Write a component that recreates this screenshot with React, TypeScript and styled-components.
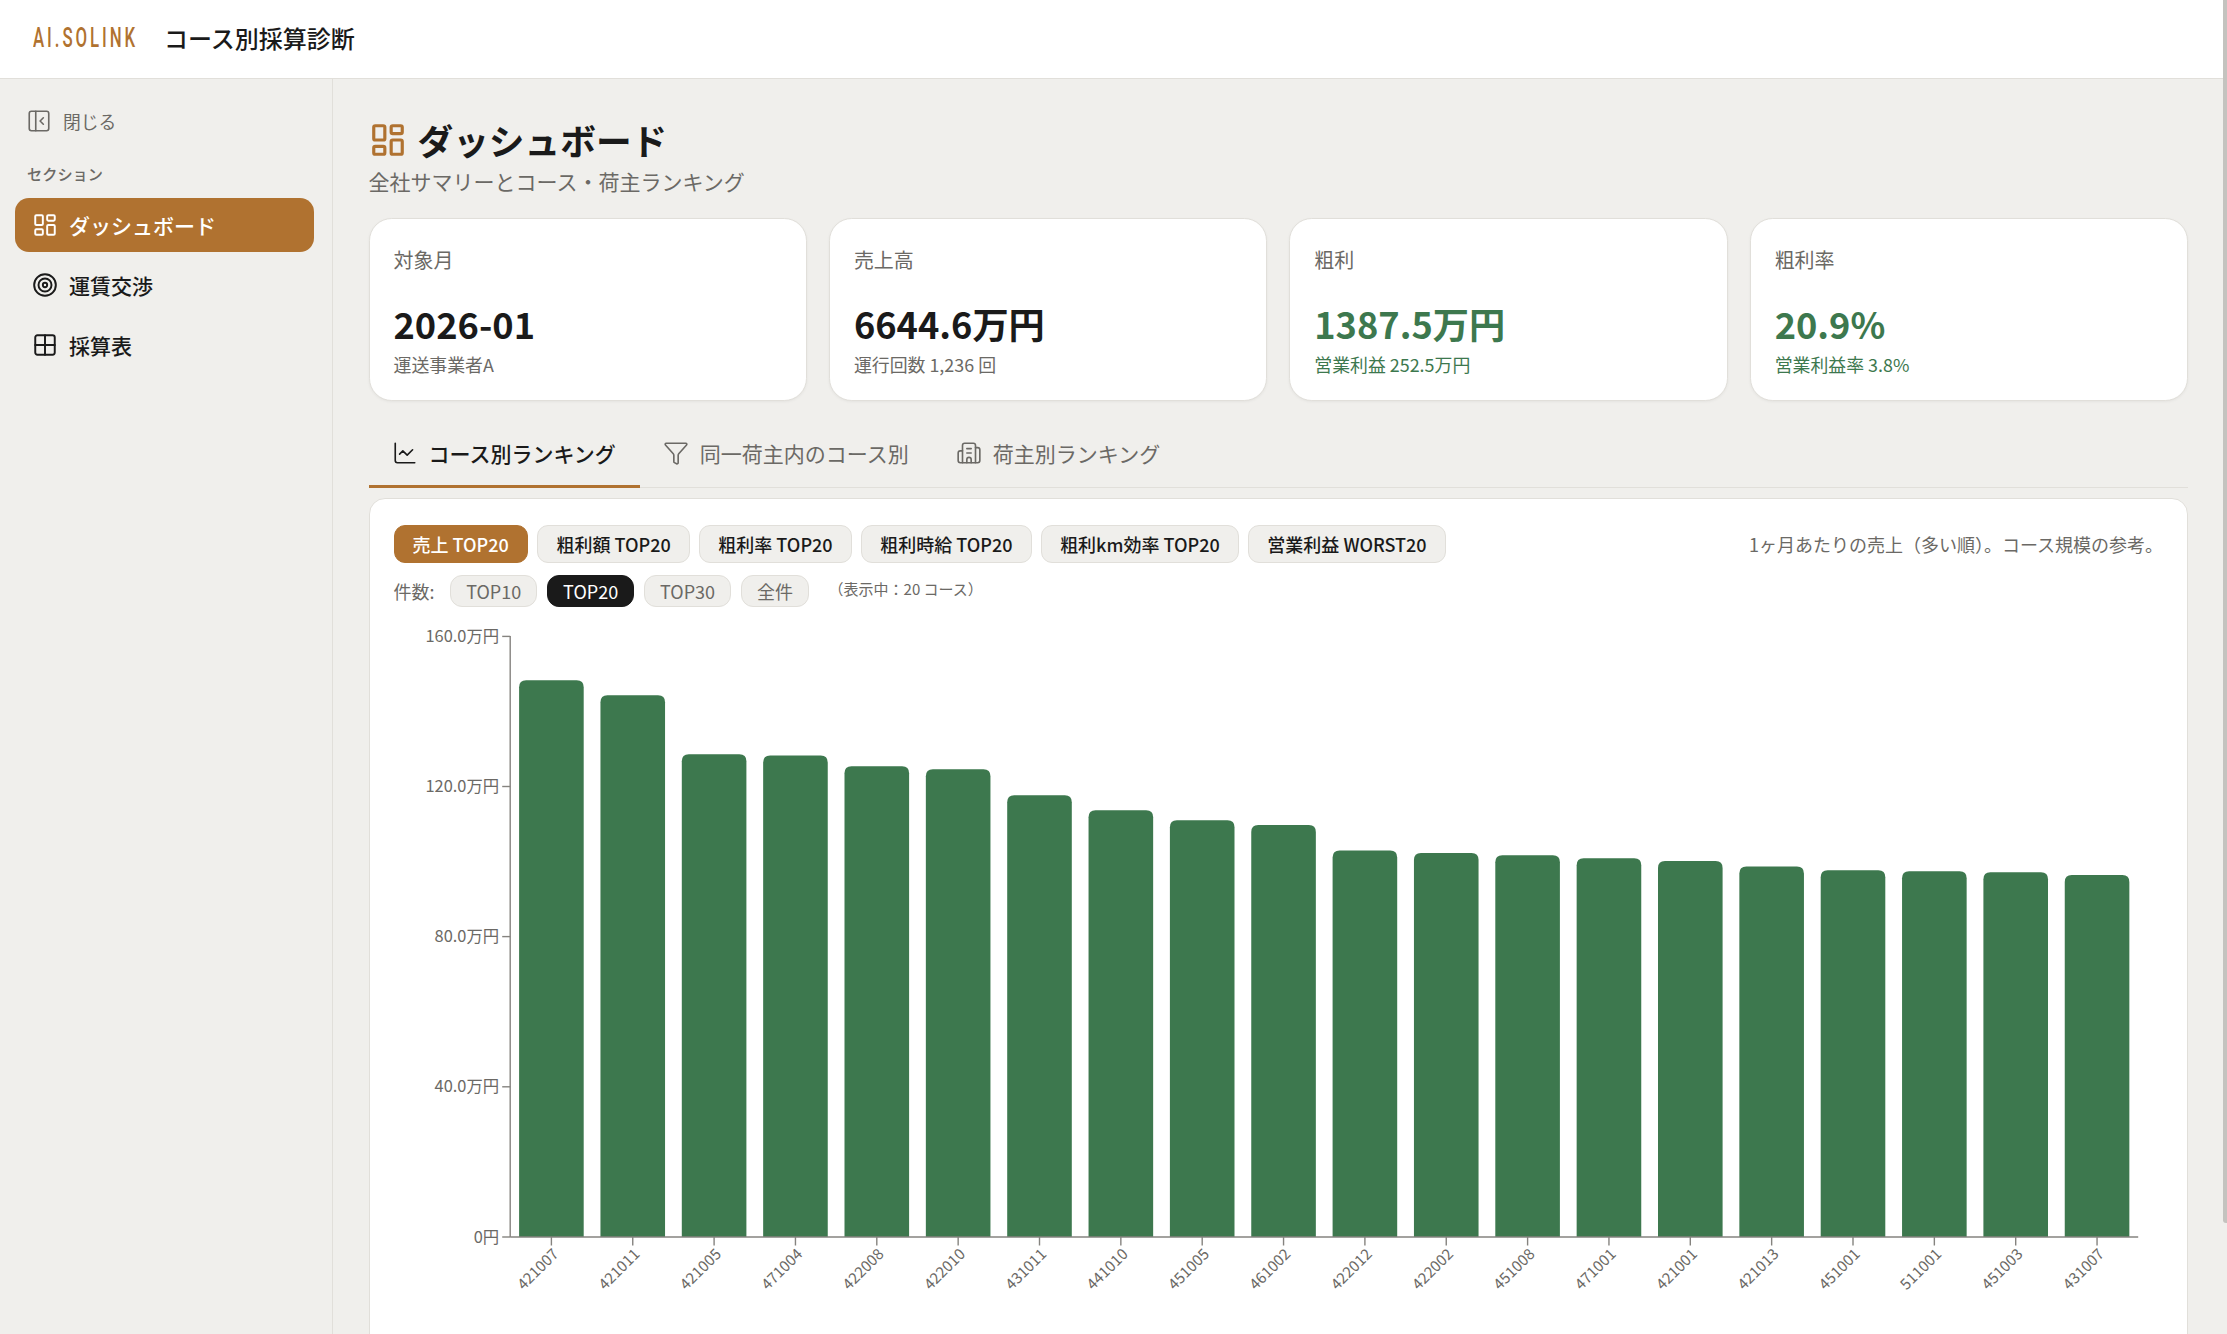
import React from "react";
import styled, { createGlobalStyle } from "styled-components";
import { Building2, ChartLine, Funnel, Grid2x2, LayoutDashboard, PanelLeftClose, Target } from "lucide-react";

const ACCENT = "#b07230";
const GREEN = "#3d784e";
const INK = "#1a1a1a";
const MUTED = "#6b6965";
const LINE = "#e1dfda";
const BG = "#f0efec";
const FONT = `"Noto Sans CJK JP", "Noto Sans", sans-serif`;

const Global = createGlobalStyle`
  html, body { margin: 0; height: 100%; overflow: hidden; background: ${BG}; }
  body { font-family: ${FONT}; color: ${INK}; }
  #root { height: 100%; }
  * { box-sizing: border-box; }
`;

const Page = styled.div`
  height: 100vh;
  display: flex;
  flex-direction: column;
  overflow: hidden;
`;
const Header = styled.header`
  height: 79px;
  flex: none;
  background: #fff;
  border-bottom: 1.4px solid ${LINE};
  display: flex;
  align-items: center;
  padding: 0 0 2px 33px;
`;
const LogoBox = styled.div`
  width: 131px;
  overflow: visible;
`;
const Logo = styled.span`
  display: inline-block;
  font-family: Roboto, sans-serif;
  font-size: 28px;
  line-height: 30px;
  font-weight: 500;
  letter-spacing: 4.9px;
  color: ${ACCENT};
  transform: scaleX(0.6);
  transform-origin: left center;
  white-space: nowrap;
`;
const AppTitle = styled.h1`
  margin: 0;
  font-size: 24px;
  line-height: 32px;
  font-weight: 500;
  color: ${INK};
`;
const Body = styled.div`
  flex: 1;
  display: grid;
  grid-template-columns: 333px 1fr;
  min-height: 0;
`;
const Sidebar = styled.aside`
  border-right: 1.4px solid ${LINE};
  padding: 20px 18px 0 15px;
`;
const CloseRow = styled.div`
  height: 44px;
  display: flex;
  align-items: center;
  gap: 11px;
  padding-left: 11px;
  font-size: 17.8px;
  color: ${MUTED};
`;
const SectionLabel = styled.div`
  margin: 20px 0 15px 12px;
  font-size: 15.2px;
  line-height: 20px;
  font-weight: 500;
  color: ${MUTED};
`;
const NavList = styled.nav`
  display: flex;
  flex-direction: column;
  gap: 6px;
`;
const NavItem = styled.div<{ $active?: boolean }>`
  height: 54px;
  display: flex;
  align-items: center;
  gap: 11px;
  padding-left: 17px;
  border-radius: 14px;
  font-size: 21px;
  font-weight: 500;
  background: ${(p) => (p.$active ? ACCENT : "transparent")};
  color: ${(p) => (p.$active ? "#fff" : INK)};
`;
const Main = styled.main`
  padding: 41px 39px 0 35.5px;
  min-width: 0;
`;
const TitleRow = styled.div`
  height: 40px;
  display: flex;
  align-items: center;
  gap: 10px;
  color: ${ACCENT};
`;
const PageTitle = styled.h2`
  margin: 0 0 0 1px;
  font-size: 35.7px;
  line-height: 40px;
  font-weight: 700;
  color: ${INK};
`;
const Subtitle = styled.p`
  margin: 6px 0 22px;
  font-size: 21px;
  line-height: 30px;
  color: ${MUTED};
`;
const Cards = styled.section`
  display: grid;
  grid-template-columns: repeat(4, 1fr);
  gap: 22px;
`;
const Card = styled.article`
  height: 182.5px;
  padding: 27px 24px 0;
  background: #fff;
  border: 1.4px solid ${LINE};
  border-radius: 22.7px;
  box-shadow: 0 1px 3px rgba(0, 0, 0, 0.05);
`;
const CardLabel = styled.div`
  font-size: 20px;
  line-height: 28px;
  color: ${MUTED};
`;
const CardValue = styled.div<{ $good?: boolean }>`
  margin-top: 24px;
  font-size: 36.2px;
  line-height: 50px;
  font-weight: 700;
  color: ${(p) => (p.$good ? GREEN : INK)};
`;
const CardSub = styled.div<{ $good?: boolean }>`
  margin-top: 2.5px;
  font-size: 17.9px;
  line-height: 26px;
  color: ${(p) => (p.$good ? GREEN : MUTED)};
`;
const Tabs = styled.div`
  margin-top: 23px;
  height: 64px;
  display: flex;
  border-bottom: 1.4px solid ${LINE};
`;
const Tab = styled.div<{ $active?: boolean }>`
  height: 64px;
  padding: 0 24px 2px 23px;
  display: flex;
  align-items: center;
  gap: 11px;
  font-size: 21px;
  font-weight: ${(p) => (p.$active ? 500 : 400)};
  color: ${(p) => (p.$active ? INK : MUTED)};
  border-bottom: 3px solid ${(p) => (p.$active ? ACCENT : "transparent")};
`;
const Panel = styled.section`
  margin-top: 10px;
  padding: 26px 24px 0;
  background: #fff;
  border: 1.4px solid ${LINE};
  border-radius: 16px;
  height: 900px;
`;
const FilterRow = styled.div`
  display: flex;
  align-items: center;
  gap: 9.6px;
`;
const Note = styled.div`
  margin-left: auto;
  font-size: 18px;
  color: ${MUTED};
`;
const Pill = styled.div<{ $on?: boolean }>`
  height: 38px;
  padding: 0 18px;
  display: flex;
  align-items: center;
  border-radius: 11px;
  font-size: 18px;
  font-weight: 500;
  white-space: nowrap;
  background: ${(p) => (p.$on ? ACCENT : BG)};
  color: ${(p) => (p.$on ? "#fff" : INK)};
  border: 1.4px solid ${(p) => (p.$on ? ACCENT : LINE)};
`;
const CountRow = styled.div`
  margin-top: 12px;
  height: 32px;
  display: flex;
  align-items: center;
  gap: 9.5px;
`;
const CountLabel = styled.span`
  width: 47px;
  font-size: 18px;
  color: ${MUTED};
`;
const CountPill = styled.div<{ $on?: boolean }>`
  height: 32px;
  padding: 0 15.2px;
  display: flex;
  align-items: center;
  border-radius: 12px;
  font-size: 18px;
  white-space: nowrap;
  background: ${(p) => (p.$on ? INK : BG)};
  color: ${(p) => (p.$on ? "#fff" : MUTED)};
  border: 1.4px solid ${(p) => (p.$on ? INK : LINE)};
`;
const CountNote = styled.span`
  margin: 0 0 4px 10px;
  font-size: 15px;
  color: ${MUTED};
  white-space: nowrap;
`;
const ChartSvg = styled.svg`
  display: block;
  margin-top: 14px;
  overflow: visible;
  font-family: ${FONT};
`;
const Scrollbar = styled.div`
  position: fixed;
  top: 0;
  right: 0;
  width: 4px;
  height: 1223px;
  background: #c4c3bf;
  border-bottom-left-radius: 3px;
`;

const OX = 394.8;
const OY = 620;
const TOPS = [680, 695, 754, 755.3, 766, 769, 795, 810, 820, 824.7, 850.3, 852.7, 855, 858, 860.7, 866.3, 870, 871, 872, 874.7];
const CODES = ["421007", "421011", "421005", "471004", "422008", "422010", "431011", "441010", "451005", "461002", "422012", "422002", "451008", "471001", "421001", "421013", "451001", "511001", "451003", "431007"];
const AXIS = "#85837f";
const BASE = 1236;
const TICKS = [["160.0万円", 635.4], ["120.0万円", 785.5], ["80.0万円", 935.6], ["40.0万円", 1085.8], ["0円", 1236]] as const;

function Chart() {
  return (
    <ChartSvg width={1768} height={700} viewBox={`${OX} ${OY} 1768 700`}>
      {CODES.map((code, i) => {
        const cx = 552.2 + i * 81.35;
        const x = cx - 32.3;
        const y = TOPS[i] - 0.7;
        const r = 7;
        return (
          <g key={code}>
            <path
              d={`M${x} ${BASE}V${y + r}Q${x} ${y} ${x + r} ${y}H${x + 64.6 - r}Q${x + 64.6} ${y} ${x + 64.6} ${y + r}V${BASE}Z`}
              fill={GREEN}
            />
            <line x1={cx} x2={cx} y1={BASE} y2={BASE + 8.5} stroke={AXIS} strokeWidth={1.4} />
            <text x={cx + 8} y={BASE + 18} fontSize={15.2} fill={MUTED} textAnchor="end" transform={`rotate(-45 ${cx + 8} ${BASE + 18})`}>
              {code}
            </text>
          </g>
        );
      })}
      <line x1={511} x2={511} y1={635} y2={BASE} stroke={AXIS} strokeWidth={1.4} />
      <line x1={511} x2={2139} y1={BASE} y2={BASE} stroke={AXIS} strokeWidth={1.4} />
      {TICKS.map(([label, y]) => (
        <g key={label}>
          <line x1={503} x2={511} y1={y} y2={y} stroke={AXIS} strokeWidth={1.4} />
          <text x={500} y={y + 5.5} fontSize={16.4} fill={MUTED} textAnchor="end">
            {label}
          </text>
        </g>
      ))}
    </ChartSvg>
  );
}

export default function App() {
  return (
    <Page>
      <Global />
      <Header>
        <LogoBox>
          <Logo>AI.SOLINK</Logo>
        </LogoBox>
        <AppTitle>コース別採算診断</AppTitle>
      </Header>
      <Body>
        <Sidebar>
          <CloseRow>
            <PanelLeftClose size={26} strokeWidth={1.5} />
            閉じる
          </CloseRow>
          <SectionLabel>セクション</SectionLabel>
          <NavList>
            <NavItem $active>
              <LayoutDashboard size={26} strokeWidth={1.8} />
              ダッシュボード
            </NavItem>
            <NavItem>
              <Target size={26} strokeWidth={1.8} />
              運賃交渉
            </NavItem>
            <NavItem>
              <Grid2x2 size={26} strokeWidth={1.8} />
              採算表
            </NavItem>
          </NavList>
        </Sidebar>
        <Main>
          <TitleRow>
            <LayoutDashboard size={38} strokeWidth={2} />
            <PageTitle>ダッシュボード</PageTitle>
          </TitleRow>
          <Subtitle>全社サマリーとコース・荷主ランキング</Subtitle>
          <Cards>
            <Card>
              <CardLabel>対象月</CardLabel>
              <CardValue>2026-01</CardValue>
              <CardSub>運送事業者A</CardSub>
            </Card>
            <Card>
              <CardLabel>売上高</CardLabel>
              <CardValue>6644.6万円</CardValue>
              <CardSub>運行回数 1,236 回</CardSub>
            </Card>
            <Card>
              <CardLabel>粗利</CardLabel>
              <CardValue $good>1387.5万円</CardValue>
              <CardSub $good>営業利益 252.5万円</CardSub>
            </Card>
            <Card>
              <CardLabel>粗利率</CardLabel>
              <CardValue $good>20.9%</CardValue>
              <CardSub $good>営業利益率 3.8%</CardSub>
            </Card>
          </Cards>
          <Tabs>
            <Tab $active>
              <ChartLine size={26} strokeWidth={1.5} />
              コース別ランキング
            </Tab>
            <Tab>
              <Funnel size={26} strokeWidth={1.5} />
              同一荷主内のコース別
            </Tab>
            <Tab>
              <Building2 size={26} strokeWidth={1.5} />
              荷主別ランキング
            </Tab>
          </Tabs>
          <Panel>
            <FilterRow>
              <Pill $on>売上 TOP20</Pill>
              <Pill>粗利額 TOP20</Pill>
              <Pill>粗利率 TOP20</Pill>
              <Pill>粗利時給 TOP20</Pill>
              <Pill>粗利km効率 TOP20</Pill>
              <Pill>営業利益 WORST20</Pill>
              <Note>1ヶ月あたりの売上（多い順）。コース規模の参考。</Note>
            </FilterRow>
            <CountRow>
              <CountLabel>件数:</CountLabel>
              <CountPill>TOP10</CountPill>
              <CountPill $on>TOP20</CountPill>
              <CountPill>TOP30</CountPill>
              <CountPill>全件</CountPill>
              <CountNote>（表示中：20 コース）</CountNote>
            </CountRow>
            <Chart />
          </Panel>
        </Main>
      </Body>
      <Scrollbar />
    </Page>
  );
}
